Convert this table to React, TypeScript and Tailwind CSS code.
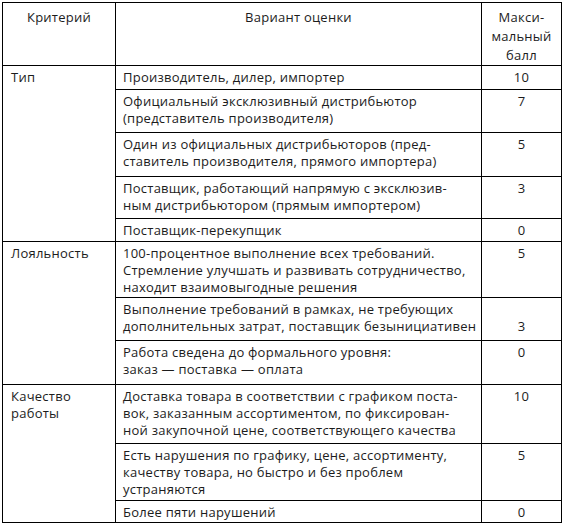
import React from "react";

type Row = {
  crit?: React.ReactNode;
  critSpan?: number;
  lines: string[];
  score: React.ReactNode;
  h: string;
};

const rows: Row[] = [
  { crit: "Тип", critSpan: 5, lines: ["Производитель, дилер, импортер"], score: "10", h: "h-[24px]" },
  { lines: ["Официальный эксклюзивный дистрибьютор", "(представитель производителя)"], score: "7", h: "h-[43px]" },
  { lines: ["Один из официальных дистрибьюторов (пред-", "ставитель производителя, прямого импортера)"], score: "5", h: "h-[44px]" },
  { lines: ["Поставщик, работающий напрямую с эксклюзив-", "ным дистрибьютором (прямым импортером)"], score: "3", h: "h-[42px]" },
  { lines: ["Поставщик-перекупщик"], score: "0", h: "h-[23px]" },
  {
    crit: "Лояльность",
    critSpan: 3,
    lines: ["100-процентное выполнение всех требований.", "Стремление улучшать и развивать сотрудничество,", "находит взаимовыгодные решения"],
    score: "5",
    h: "h-[56px]",
  },
  {
    lines: ["Выполнение требований в рамках, не требующих", "дополнительных затрат, поставщик безынициативен"],
    score: (
      <>
        &nbsp;
        <br />3
      </>
    ),
    h: "h-[43px]",
  },
  { lines: ["Работа сведена до формального уровня:", "заказ — поставка — оплата"], score: "0", h: "h-[44px]" },
  {
    crit: (
      <>
        Качество
        <br />
        работы
      </>
    ),
    critSpan: 3,
    lines: ["Доставка товара в соответствии с графиком поста-", "вок, заказанным ассортиментом, по фиксирован-", "ной закупочной цене, соответствующего качества"],
    score: "10",
    h: "h-[59px]",
  },
  {
    lines: ["Есть нарушения по графику, цене, ассортименту,", "качеству товара, но быстро и без проблем", "устраняются"],
    score: "5",
    h: "h-[57px]",
  },
  { lines: ["Более пяти нарушений"], score: "0", h: "h-[22px]" },
];

export default function App() {
  return (
    <div className="w-[564px] h-[531px] bg-white pl-[2px] pt-[2px] text-[#1c1c1c] text-[13px] tracking-[0.25px]" style={{ fontFamily: '"Open Sans", "Noto Sans", sans-serif' }}>
      <table className="border-collapse table-fixed w-[559px]">
        <colgroup>
          <col className="w-[113px]" />
          <col className="w-[366px]" />
          <col className="w-[80px]" />
        </colgroup>
        <thead>
          <tr className="h-[62px]">
            <th className="border border-black font-normal align-top text-center pt-[5px] leading-[19px]">Критерий</th>
            <th className="border border-black font-normal align-top text-center pt-[5px] leading-[19px]">Вариант оценки</th>
            <th className="border border-black font-normal align-top text-center pt-[5px] leading-[19px]">
              Макси-
              <br />
              мальный
              <br />
              балл
            </th>
          </tr>
        </thead>
        <tbody>
          {rows.map((r, i) => (
            <tr key={i} className={r.h}>
              {r.crit !== undefined && (
                <td rowSpan={r.critSpan} className="border border-black align-top pl-[8px] pt-[3px] leading-[17px]">
                  {r.crit}
                </td>
              )}
              <td className="border border-black align-top pl-[7px] pr-1 pt-[3px] leading-[17px] whitespace-nowrap">
                {r.lines.map((l, j) => (
                  <div key={j}>{l}</div>
                ))}
              </td>
              <td className="border border-black align-top text-center pt-[3px] leading-[17px]">{r.score}</td>
            </tr>
          ))}
        </tbody>
      </table>
    </div>
  );
}
